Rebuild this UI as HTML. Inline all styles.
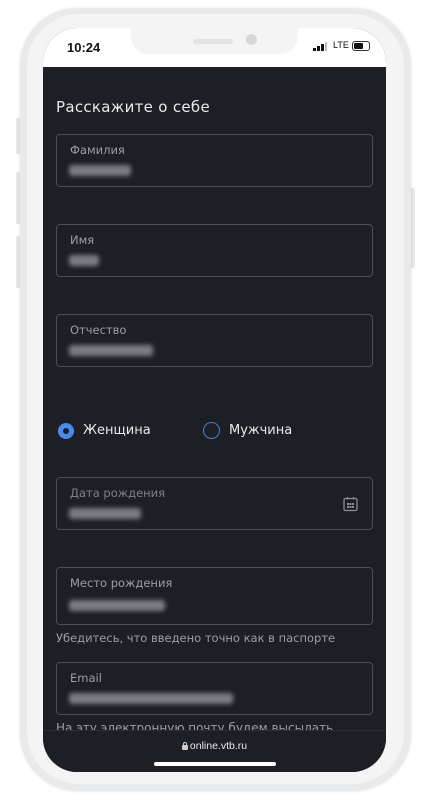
<!DOCTYPE html>
<html><head><meta charset="utf-8"><style>
*{margin:0;padding:0;box-sizing:border-box}
body{width:428px;height:800px;background:#fff;position:relative;overflow:hidden;font-family:"DejaVu Sans","Liberation Sans",sans-serif}
.frame{position:absolute;left:20px;top:8px;width:391px;height:783px;border-radius:58px;background:#e9eaec;box-shadow:0 0 3px rgba(0,0,0,.12)}
.frame2{position:absolute;left:27px;top:14px;width:377px;height:770px;border-radius:52px;background:#f4f4f5}
.btn{position:absolute;background:#e6e7e9;width:5px;border-radius:2px}
.screen{position:absolute;left:43px;top:28px;width:343px;height:744px;border-radius:34px;overflow:hidden;background:#1d1f24}
.status{position:absolute;left:0;top:0;width:343px;height:39px;background:#fff}
.notch{position:absolute;left:88px;top:0;width:167px;height:26px;background:#f4f4f5;border-radius:0 0 18px 18px}
.time{position:absolute;left:24px;top:12px;font:bold 13px "Liberation Sans",sans-serif;color:#111}
.inp{position:absolute;left:13px;width:317px;border:1px solid #4a4e57;border-radius:4px}
.lab{position:absolute;left:13px;top:8px;font-size:11.5px;color:#9a9ea6}
.blur{position:absolute;left:12px;height:11px;background:#9a9da3;filter:blur(2.5px);border-radius:3px;opacity:.75}
.t{position:absolute;color:#e8e9ec}
.hint{position:absolute;left:13px;font-size:11.5px;color:#9a9ea6}
</style></head><body>
<div class="btn" style="left:16px;top:118px;height:36px"></div>
<div class="btn" style="left:16px;top:172px;height:52px"></div>
<div class="btn" style="left:16px;top:236px;height:52px"></div>
<div class="btn" style="left:410px;top:188px;height:80px"></div>
<div class="frame"></div><div class="frame2"></div>
<div class="screen">
 <div class="status"></div>
 <div class="notch"><div style="position:absolute;left:62px;top:11px;width:40px;height:5px;border-radius:3px;background:#e2e3e5"></div><div style="position:absolute;left:115px;top:6px;width:11px;height:11px;border-radius:50%;background:#d6d7d9"></div></div>
 <div class="time">10:24</div>
 <div style="position:absolute;left:270px;top:14px;width:16px;height:9px">
  <div style="position:absolute;left:0;bottom:0;width:3px;height:3px;background:#111"></div>
  <div style="position:absolute;left:4px;bottom:0;width:3px;height:5px;background:#111"></div>
  <div style="position:absolute;left:8px;bottom:0;width:3px;height:7px;background:#111"></div>
  <div style="position:absolute;left:12px;bottom:0;width:2px;height:9px;background:#bbb"></div>
 </div>
 <div style="position:absolute;left:290px;top:12px;font:9px 'Liberation Sans',sans-serif;color:#111">LTE</div>
 <div style="position:absolute;left:309px;top:13px;width:18px;height:10px;border:1px solid #333;border-radius:3px"><div style="position:absolute;left:1px;top:1px;width:9px;height:6px;background:#111;border-radius:1px"></div></div>
 <div class="t" style="left:13px;top:70px;font-size:15px;letter-spacing:.3px">Расскажите о себе</div>
 <div class="inp" style="top:106px;height:53px"><div class="lab">Фамилия</div><div class="blur" style="top:30px;width:62px"></div></div>
 <div class="inp" style="top:196px;height:53px"><div class="lab">Имя</div><div class="blur" style="top:30px;width:30px"></div></div>
 <div class="inp" style="top:286px;height:53px"><div class="lab">Отчество</div><div class="blur" style="top:30px;width:84px"></div></div>
 <div style="position:absolute;left:15px;top:395px;width:16px;height:16px;border-radius:50%;background:#4a8af0"><div style="position:absolute;left:5px;top:5px;width:6px;height:6px;border-radius:50%;background:#1d1f24"></div></div>
 <div class="t" style="left:40px;top:395px;font-size:13px">Женщина</div>
 <div style="position:absolute;left:160px;top:394px;width:17px;height:17px;border-radius:50%;border:1.5px solid #4a7ad8"></div>
 <div class="t" style="left:186px;top:395px;font-size:13px">Мужчина</div>
 <div class="inp" style="top:449px;height:53px"><div class="lab" style="color:#7d818a">Дата рождения</div><div class="blur" style="top:30px;width:72px"></div>
  <svg style="position:absolute;left:286px;top:18px" width="15" height="16" viewBox="0 0 15 16"><rect x="1" y="2.5" width="13" height="12" rx="1.5" fill="none" stroke="#8a8e96" stroke-width="1.3"/><line x1="4.5" y1="1" x2="4.5" y2="3.5" stroke="#8a8e96" stroke-width="1.3"/><line x1="10.5" y1="1" x2="10.5" y2="3.5" stroke="#8a8e96" stroke-width="1.3"/><g fill="#8a8e96"><rect x="4" y="7" width="2" height="2"/><rect x="6.5" y="7" width="2" height="2"/><rect x="9" y="7" width="2" height="2"/><rect x="4" y="10" width="2" height="2"/><rect x="6.5" y="10" width="2" height="2"/><rect x="9" y="10" width="2" height="2"/></g></svg></div>
 <div class="inp" style="top:539px;height:58px"><div class="lab">Место рождения</div><div class="blur" style="top:32px;width:96px"></div></div>
 <div class="hint" style="top:603px">Убедитесь, что введено точно как в паспорте</div>
 <div class="inp" style="top:634px;height:53px"><div class="lab">Email</div><div class="blur" style="top:30px;width:164px"></div></div>
 <div class="hint" style="top:693px;font-size:12px">На эту электронную почту будем высылать</div>
 <div style="position:absolute;left:0;top:702px;width:343px;height:42px;background:#1d1f24;border-top:1px solid #2a2d33"></div>
 <div style="position:absolute;left:0;top:712px;width:343px;text-align:center;font:10.5px 'Liberation Sans',sans-serif;color:#e8e9ec"><span style="display:inline-block;width:6px;height:8px;margin-right:2px;position:relative;vertical-align:-1px"><span style="position:absolute;left:1px;top:0;width:4px;height:5px;border:1px solid #ccc;border-radius:2px 2px 0 0"></span><span style="position:absolute;left:0;top:3px;width:6px;height:5px;background:#ccc;border-radius:1px"></span></span>online.vtb.ru</div>
 <div style="position:absolute;left:111px;top:734px;width:122px;height:4px;border-radius:2px;background:#fff"></div>
</div>
</body></html>
